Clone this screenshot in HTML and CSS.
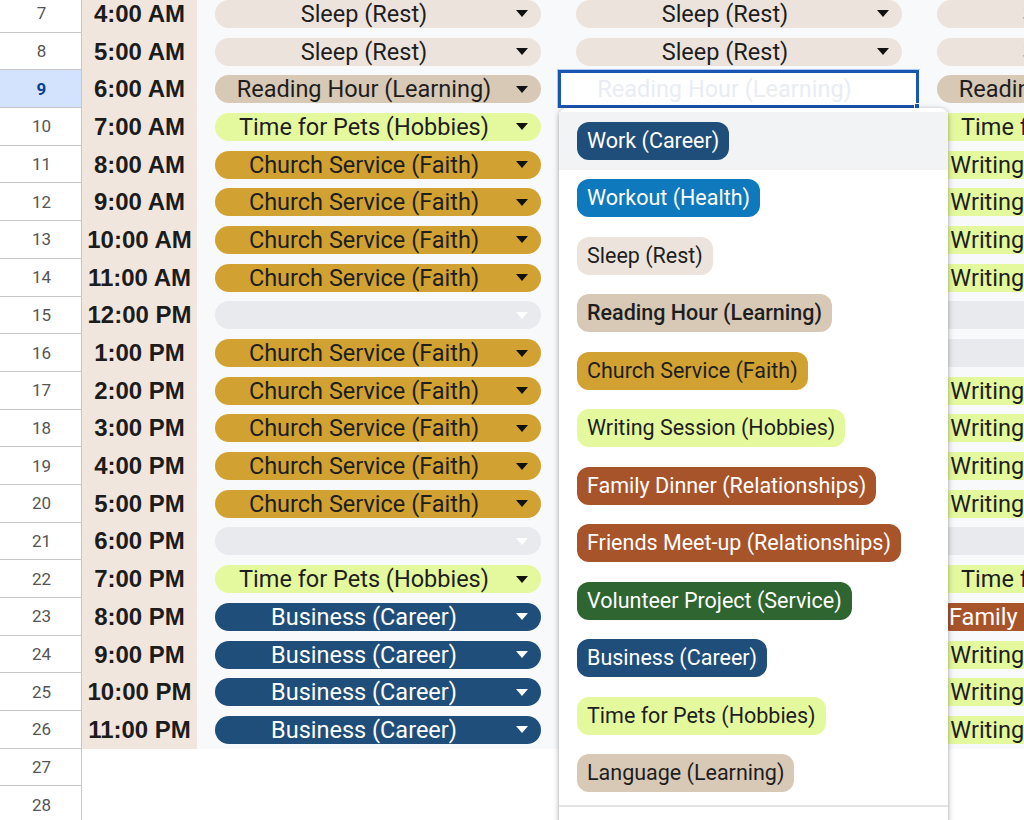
FILE: index.html
```html
<!DOCTYPE html>
<html>
<head>
<meta charset="utf-8">
<link rel="stylesheet" href="styles.css">
</head>
<body>
<div class="sheet">
  <div class="row"><div class="rh">7</div><div class="time">4:00 AM</div>
    <div class="cell"><div class="chip sleep"><span class="label">Sleep (Rest)</span><span class="arrow"></span></div></div>
    <div class="cell"><div class="chip sleep"><span class="label">Sleep (Rest)</span><span class="arrow"></span></div></div>
    <div class="cell"><div class="chip sleep"><span class="label">Sleep (Rest)</span><span class="arrow"></span></div></div></div>
  <div class="row"><div class="rh">8</div><div class="time">5:00 AM</div>
    <div class="cell"><div class="chip sleep"><span class="label">Sleep (Rest)</span><span class="arrow"></span></div></div>
    <div class="cell"><div class="chip sleep"><span class="label">Sleep (Rest)</span><span class="arrow"></span></div></div>
    <div class="cell"><div class="chip sleep"><span class="label">Sleep (Rest)</span><span class="arrow"></span></div></div></div>
  <div class="row"><div class="rh active">9</div><div class="time">6:00 AM</div>
    <div class="cell"><div class="chip learn"><span class="label">Reading Hour (Learning)</span><span class="arrow"></span></div></div>
    <div class="cell selected"><span class="sel-text">Reading Hour (Learning)</span><span class="handle"></span></div>
    <div class="cell"><div class="chip learn"><span class="label">Reading Hour (Learning)</span><span class="arrow"></span></div></div></div>
  <div class="row"><div class="rh">10</div><div class="time">7:00 AM</div>
    <div class="cell"><div class="chip lime"><span class="label">Time for Pets (Hobbies)</span><span class="arrow"></span></div></div>
    <div class="cell"><div class="chip lime"><span class="label">Time for Pets (Hobbies)</span><span class="arrow"></span></div></div>
    <div class="cell"><div class="chip lime"><span class="label">Time for Pets (Hobbies)</span><span class="arrow"></span></div></div></div>
  <div class="row"><div class="rh">11</div><div class="time">8:00 AM</div>
    <div class="cell"><div class="chip gold"><span class="label">Church Service (Faith)</span><span class="arrow"></span></div></div>
    <div class="cell"><div class="chip gold"><span class="label">Church Service (Faith)</span><span class="arrow"></span></div></div>
    <div class="cell"><div class="chip lime"><span class="label">Writing Session (Hobbies)</span><span class="arrow"></span></div></div></div>
  <div class="row"><div class="rh">12</div><div class="time">9:00 AM</div>
    <div class="cell"><div class="chip gold"><span class="label">Church Service (Faith)</span><span class="arrow"></span></div></div>
    <div class="cell"><div class="chip gold"><span class="label">Church Service (Faith)</span><span class="arrow"></span></div></div>
    <div class="cell"><div class="chip lime"><span class="label">Writing Session (Hobbies)</span><span class="arrow"></span></div></div></div>
  <div class="row"><div class="rh">13</div><div class="time">10:00 AM</div>
    <div class="cell"><div class="chip gold"><span class="label">Church Service (Faith)</span><span class="arrow"></span></div></div>
    <div class="cell"><div class="chip gold"><span class="label">Church Service (Faith)</span><span class="arrow"></span></div></div>
    <div class="cell"><div class="chip lime"><span class="label">Writing Session (Hobbies)</span><span class="arrow"></span></div></div></div>
  <div class="row"><div class="rh">14</div><div class="time">11:00 AM</div>
    <div class="cell"><div class="chip gold"><span class="label">Church Service (Faith)</span><span class="arrow"></span></div></div>
    <div class="cell"><div class="chip gold"><span class="label">Church Service (Faith)</span><span class="arrow"></span></div></div>
    <div class="cell"><div class="chip lime"><span class="label">Writing Session (Hobbies)</span><span class="arrow"></span></div></div></div>
  <div class="row"><div class="rh">15</div><div class="time">12:00 PM</div>
    <div class="cell"><div class="chip empty"><span class="label"></span><span class="arrow"></span></div></div>
    <div class="cell"><div class="chip empty"><span class="label"></span><span class="arrow"></span></div></div>
    <div class="cell"><div class="chip empty"><span class="label"></span><span class="arrow"></span></div></div></div>
  <div class="row"><div class="rh">16</div><div class="time">1:00 PM</div>
    <div class="cell"><div class="chip gold"><span class="label">Church Service (Faith)</span><span class="arrow"></span></div></div>
    <div class="cell"><div class="chip gold"><span class="label">Church Service (Faith)</span><span class="arrow"></span></div></div>
    <div class="cell"><div class="chip empty"><span class="label"></span><span class="arrow"></span></div></div></div>
  <div class="row"><div class="rh">17</div><div class="time">2:00 PM</div>
    <div class="cell"><div class="chip gold"><span class="label">Church Service (Faith)</span><span class="arrow"></span></div></div>
    <div class="cell"><div class="chip gold"><span class="label">Church Service (Faith)</span><span class="arrow"></span></div></div>
    <div class="cell"><div class="chip lime"><span class="label">Writing Session (Hobbies)</span><span class="arrow"></span></div></div></div>
  <div class="row"><div class="rh">18</div><div class="time">3:00 PM</div>
    <div class="cell"><div class="chip gold"><span class="label">Church Service (Faith)</span><span class="arrow"></span></div></div>
    <div class="cell"><div class="chip gold"><span class="label">Church Service (Faith)</span><span class="arrow"></span></div></div>
    <div class="cell"><div class="chip lime"><span class="label">Writing Session (Hobbies)</span><span class="arrow"></span></div></div></div>
  <div class="row"><div class="rh">19</div><div class="time">4:00 PM</div>
    <div class="cell"><div class="chip gold"><span class="label">Church Service (Faith)</span><span class="arrow"></span></div></div>
    <div class="cell"><div class="chip gold"><span class="label">Church Service (Faith)</span><span class="arrow"></span></div></div>
    <div class="cell"><div class="chip lime"><span class="label">Writing Session (Hobbies)</span><span class="arrow"></span></div></div></div>
  <div class="row"><div class="rh">20</div><div class="time">5:00 PM</div>
    <div class="cell"><div class="chip gold"><span class="label">Church Service (Faith)</span><span class="arrow"></span></div></div>
    <div class="cell"><div class="chip gold"><span class="label">Church Service (Faith)</span><span class="arrow"></span></div></div>
    <div class="cell"><div class="chip lime"><span class="label">Writing Session (Hobbies)</span><span class="arrow"></span></div></div></div>
  <div class="row"><div class="rh">21</div><div class="time">6:00 PM</div>
    <div class="cell"><div class="chip empty"><span class="label"></span><span class="arrow"></span></div></div>
    <div class="cell"><div class="chip empty"><span class="label"></span><span class="arrow"></span></div></div>
    <div class="cell"><div class="chip empty"><span class="label"></span><span class="arrow"></span></div></div></div>
  <div class="row"><div class="rh">22</div><div class="time">7:00 PM</div>
    <div class="cell"><div class="chip lime"><span class="label">Time for Pets (Hobbies)</span><span class="arrow"></span></div></div>
    <div class="cell"><div class="chip lime"><span class="label">Time for Pets (Hobbies)</span><span class="arrow"></span></div></div>
    <div class="cell"><div class="chip lime"><span class="label">Time for Pets (Hobbies)</span><span class="arrow"></span></div></div></div>
  <div class="row"><div class="rh">23</div><div class="time">8:00 PM</div>
    <div class="cell"><div class="chip navy"><span class="label">Business (Career)</span><span class="arrow"></span></div></div>
    <div class="cell"><div class="chip navy"><span class="label">Business (Career)</span><span class="arrow"></span></div></div>
    <div class="cell"><div class="chip rust"><span class="label">Family Dinner (Relationships)</span><span class="arrow"></span></div></div></div>
  <div class="row"><div class="rh">24</div><div class="time">9:00 PM</div>
    <div class="cell"><div class="chip navy"><span class="label">Business (Career)</span><span class="arrow"></span></div></div>
    <div class="cell"><div class="chip navy"><span class="label">Business (Career)</span><span class="arrow"></span></div></div>
    <div class="cell"><div class="chip lime"><span class="label">Writing Session (Hobbies)</span><span class="arrow"></span></div></div></div>
  <div class="row"><div class="rh">25</div><div class="time">10:00 PM</div>
    <div class="cell"><div class="chip navy"><span class="label">Business (Career)</span><span class="arrow"></span></div></div>
    <div class="cell"><div class="chip navy"><span class="label">Business (Career)</span><span class="arrow"></span></div></div>
    <div class="cell"><div class="chip lime"><span class="label">Writing Session (Hobbies)</span><span class="arrow"></span></div></div></div>
  <div class="row"><div class="rh">26</div><div class="time">11:00 PM</div>
    <div class="cell"><div class="chip navy"><span class="label">Business (Career)</span><span class="arrow"></span></div></div>
    <div class="cell"><div class="chip navy"><span class="label">Business (Career)</span><span class="arrow"></span></div></div>
    <div class="cell"><div class="chip lime"><span class="label">Writing Session (Hobbies)</span><span class="arrow"></span></div></div></div>
  <div class="row blank"><div class="rh">27</div><div class="time"></div><div class="cell"></div><div class="cell"></div><div class="cell"></div></div>
  <div class="row blank"><div class="rh">28</div><div class="time"></div><div class="cell"></div><div class="cell"></div><div class="cell"></div></div>
</div>

<div class="dropdown">
  <ul class="options">
    <li class="option hover"><span class="tag navy">Work (Career)</span></li>
    <li class="option"><span class="tag ocean">Workout (Health)</span></li>
    <li class="option"><span class="tag sleep">Sleep (Rest)</span></li>
    <li class="option"><span class="tag learn current">Reading Hour (Learning)</span></li>
    <li class="option"><span class="tag gold">Church Service (Faith)</span></li>
    <li class="option"><span class="tag lime">Writing Session (Hobbies)</span></li>
    <li class="option"><span class="tag rust">Family Dinner (Relationships)</span></li>
    <li class="option"><span class="tag rust">Friends Meet-up (Relationships)</span></li>
    <li class="option"><span class="tag forest">Volunteer Project (Service)</span></li>
    <li class="option"><span class="tag navy">Business (Career)</span></li>
    <li class="option"><span class="tag lime">Time for Pets (Hobbies)</span></li>
    <li class="option"><span class="tag learn">Language (Learning)</span></li>
  </ul>
  <div class="footer"></div>
</div>
</body>
</html>
```
FILE: styles.css
```css
html, body {
  margin: 0;
  padding: 0;
  overflow: hidden;
  background: #ffffff;
}
body {
  width: 1024px;
  height: 820px;
  position: relative;
  font-family: Roboto, "Liberation Sans", Arial, sans-serif;
}
.sheet {
  width: 1024px;
  overflow: hidden;
  margin-top: -5px;
}
.row {
  display: grid;
  grid-template-columns: 82px 115px 361px 361px 361px;
  height: 37.7px;
}
.rh {
  box-sizing: border-box;
  border-right: 1px solid #c7c7c7;
  border-bottom: 1px solid #c7c7c7;
  background: #ffffff;
  color: #555555;
  font-size: 17px;
  display: flex;
  align-items: center;
  justify-content: center;
  padding-left: 2px;
}
.rh.active {
  background: #d3e3fd;
  color: #0b3f8f;
  font-weight: 700;
}
.time {
  background: #f0e6dd;
  font-family: "Liberation Sans", Arial, sans-serif;
  font-weight: 700;
  font-size: 24px;
  color: #1c1c1c;
  display: flex;
  align-items: center;
  justify-content: center;
  white-space: nowrap;
  overflow: hidden;
}
.cell {
  background: #f8f9fa;
  padding: 0 17px 0 18px;
  display: flex;
  align-items: center;
  position: relative;
}
.row.blank .time, .row.blank .cell {
  background: #ffffff;
}
.chip {
  width: 100%;
  height: 28px;
  border-radius: 14px;
  display: flex;
  align-items: center;
  overflow: hidden;
}
.label {
  flex: 1;
  min-width: 0;
  padding-left: 12px;
  text-align: center;
  white-space: nowrap;
  overflow: hidden;
  font-size: 23.5px;
  line-height: 28px;
}
.arrow {
  width: 40px;
  flex: none;
  display: flex;
  justify-content: center;
}
.arrow::before {
  content: "";
  border-left: 6px solid transparent;
  border-right: 6px solid transparent;
  border-top: 7px solid #111111;
  margin-left: 2px;
}
.sleep { background: #ece4dc; color: #1e1e1e; }
.learn { background: #d8c8b6; color: #1e1e1e; }
.lime { background: #e4f99d; color: #1e1e1e; }
.gold { background: #d1a232; color: #1e1e1e; }
.navy { background: #1f4e7a; color: #ffffff; }
.ocean { background: #0e79bd; color: #ffffff; }
.rust { background: #a8542b; color: #ffffff; }
.forest { background: #2e6530; color: #ffffff; }
.empty { background: #e8eaed; }
.navy .arrow::before, .empty .arrow::before, .rust .arrow::before { border-top-color: #ffffff; }

.cell.selected {
  background: #ffffff;
  box-shadow: inset 0 0 0 3px #1b55b2, 0 0 0 1px #a9c6f5;
  justify-content: center;
  padding: 0 40px 0 12px;
}
.sel-text {
  color: #e9edf3;
  font-size: 23.5px;
  white-space: nowrap;
}
.handle {
  position: absolute;
  right: -3px;
  bottom: -3px;
  width: 6px;
  height: 6px;
  background: #1b55b2;
  border: 1px solid #ffffff;
}

.dropdown {
  position: absolute;
  left: 559px;
  top: 108px;
  width: 389px;
  height: 740px;
  background: #ffffff;
  border-radius: 8px 8px 0 0;
  box-shadow: 0 1px 4px rgba(0, 0, 0, 0.28), 0 2px 8px rgba(0, 0, 0, 0.12);
  padding-top: 4px;
  box-sizing: border-box;
}
.options {
  list-style: none;
  margin: 0;
  padding: 0 0 3px 0;
}
.option {
  height: 57.5px;
  display: flex;
  align-items: center;
  padding-left: 18px;
}
.option.hover {
  background: #f1f3f4;
}
.tag {
  display: inline-block;
  font-size: 21.5px;
  line-height: 38px;
  height: 38px;
  padding: 0 10px;
  border-radius: 12px;
  white-space: nowrap;
}
.tag.current {
  font-weight: 500;
}
.footer {
  border-top: 2px solid #e3e3e3;
}
```
